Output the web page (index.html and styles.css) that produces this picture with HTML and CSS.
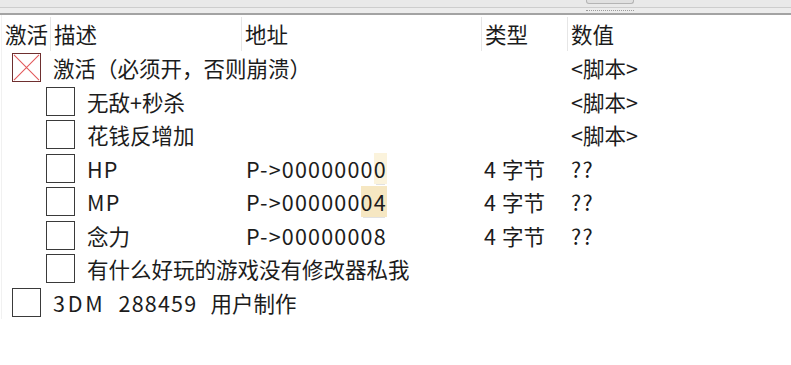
FILE: index.html
```html
<!DOCTYPE html>
<html lang="zh-CN">
<head>
    <meta charset="UTF-8">
    <title>地址列表</title>
    <link rel="stylesheet" href="styles.css">
</head>
<body>

    <div class="toolbar">
        <span class="tab"></span>
    </div>
    <div class="splitter">
        <span class="grip"></span>
    </div>

    <div class="list">
        <div class="header">
            <div class="col">激活</div>
            <div class="col">描述</div>
            <div class="col">地址</div>
            <div class="col">类型</div>
            <div class="col">数值</div>
        </div>

        <div class="row">
            <div class="desc">
                <span class="box box-x">
                    <svg viewBox="0 0 28 28" width="27" height="27"><path d="M1 1 L27 27 M27 1 L1 27" stroke="#e2585a" stroke-width="1.1" fill="none"/></svg>
                </span>激活（必须开，否则崩溃）
            </div>
            <div></div>
            <div></div>
            <div>&lt;脚本&gt;</div>
        </div>
        <div class="row">
            <div class="desc sub"><span class="box"></span>无敌+秒杀</div>
            <div></div>
            <div></div>
            <div>&lt;脚本&gt;</div>
        </div>
        <div class="row">
            <div class="desc sub"><span class="box"></span>花钱反增加</div>
            <div></div>
            <div></div>
            <div>&lt;脚本&gt;</div>
        </div>
        <div class="row">
            <div class="desc sub"><span class="box"></span><span class="lat">HP</span></div>
            <div class="lat addr">P-&gt;0000000<span class="mark">0</span></div>
            <div><span class="lat">4</span> 字节</div>
            <div class="lat">??</div>
        </div>
        <div class="row">
            <div class="desc sub"><span class="box"></span><span class="lat">MP</span></div>
            <div class="lat addr">P-&gt;000000<span class="mark strong">04</span></div>
            <div><span class="lat">4</span> 字节</div>
            <div class="lat">??</div>
        </div>
        <div class="row">
            <div class="desc sub"><span class="box"></span>念力</div>
            <div class="lat addr">P-&gt;00000008</div>
            <div><span class="lat">4</span> 字节</div>
            <div class="lat">??</div>
        </div>
        <div class="row">
            <div class="desc sub"><span class="box"></span>有什么好玩的游戏没有修改器私我</div>
            <div></div>
            <div></div>
            <div></div>
        </div>
        <div class="row">
            <div class="desc"><span class="box"></span><span class="lat wide">3DM</span><span class="lat gap">288459</span><span class="gap">用户制作</span></div>
            <div></div>
            <div></div>
            <div></div>
        </div>
    </div>

</body>
</html>
```

FILE: styles.css
```css
body {
    margin: 0;
    padding: 0;
    background-color: #fff;
    color: #1c1c1c;
    font-family: "Noto Sans CJK SC", "Noto Sans", sans-serif;
    font-size: 21.5px;
    overflow: hidden;
}

.toolbar {
    height: 7px;
    background-color: #e9e9e9;
    border-bottom: 1px solid #cdcdcd;
    position: relative;
}

.tab {
    position: absolute;
    left: 586px;
    top: 0;
    width: 46px;
    height: 3px;
    border: 1px solid #b4b4b4;
    border-top: none;
    border-radius: 0 0 3px 3px;
    background-color: #e0e0e0;
}

.splitter {
    height: 5px;
    background-color: #ececec;
    border-bottom: 2px solid #a3a3a3;
    position: relative;
}

.grip {
    position: absolute;
    left: 586px;
    top: 2px;
    width: 48px;
    border-top: 1px dotted #9a9a9a;
}

.list {
    border-left: 1px solid #f1f1f1;
    margin-left: 1px;
}

.header {
    display: grid;
    grid-template-columns: 49px 191px 240px 86px 1fr;
    height: 36px;
    padding-top: 2px;
    box-sizing: border-box;
}

.header .col {
    display: flex;
    align-items: center;
    padding-left: 3px;
    border-right: 1px solid #e6e6e6;
    line-height: 1;
}

.header .col:last-child {
    border-right: none;
}

.row {
    display: grid;
    grid-template-columns: 242px 240px 87px 1fr;
    height: 33.5px;
    align-items: center;
    line-height: 1;
    white-space: nowrap;
}

.desc {
    display: flex;
    align-items: center;
    padding-left: 10px;
}

.desc.sub {
    padding-left: 44px;
}

.box {
    width: 27px;
    height: 27px;
    border: 1.5px solid #3a3a3a;
    background-color: #fff;
    margin-right: 12px;
    flex-shrink: 0;
}

.box svg {
    display: block;
}

.box-x {
    border-color: #6e2f2f;
}

.lat {
    letter-spacing: 1.2px;
}

.lat.wide {
    letter-spacing: 2.8px;
}

.gap {
    margin-left: 13px;
}

.addr {
    padding-left: 2px;
}

.mark {
    background-color: #fbf3dc;
    box-shadow: 0 3px 0 -2px #e2e2e2;
}

.mark.strong {
    background-color: #f6e7c2;
}
```
